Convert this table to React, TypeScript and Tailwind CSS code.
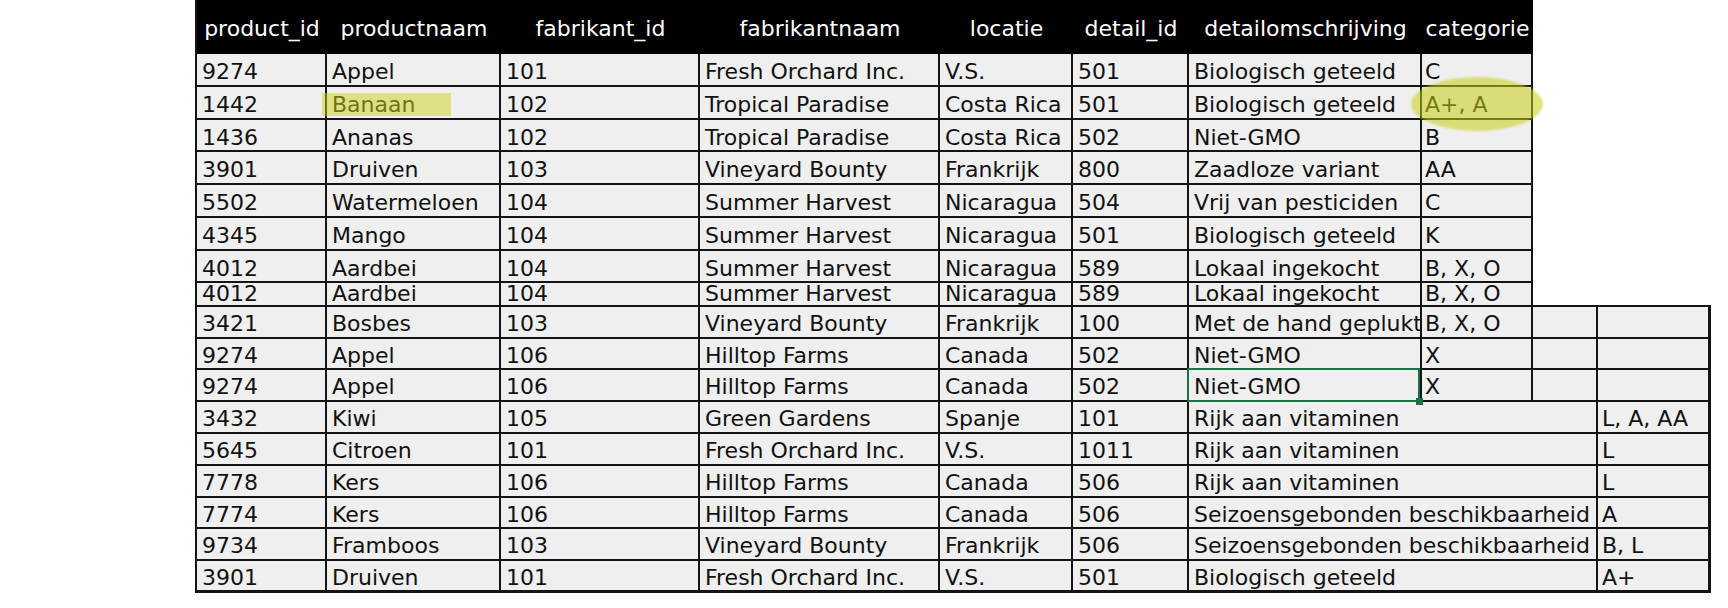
import React from "react";

const W = ["w-[130px]", "w-[174px]", "w-[199px]", "w-[240px]", "w-[133px]", "w-[116px]", "w-[233px]", "w-[111px]"];

const header = ["product_id", "productnaam", "fabrikant_id", "fabrikantnaam", "locatie", "detail_id", "detailomschrijving", "categorie"];

const upper = [
  { h: "h-[33px]", c: ["9274", "Appel", "101", "Fresh Orchard Inc.", "V.S.", "501", "Biologisch geteeld", "C"] },
  { h: "h-[33px]", c: ["1442", "Banaan", "102", "Tropical Paradise", "Costa Rica", "501", "Biologisch geteeld", "A+, A"] },
  { h: "h-[32px]", c: ["1436", "Ananas", "102", "Tropical Paradise", "Costa Rica", "502", "Niet-GMO", "B"] },
  { h: "h-[33px]", c: ["3901", "Druiven", "103", "Vineyard Bounty", "Frankrijk", "800", "Zaadloze variant", "AA"] },
  { h: "h-[33px]", c: ["5502", "Watermeloen", "104", "Summer Harvest", "Nicaragua", "504", "Vrij van pesticiden", "C"] },
  { h: "h-[33px]", c: ["4345", "Mango", "104", "Summer Harvest", "Nicaragua", "501", "Biologisch geteeld", "K"] },
  { h: "h-[32px]", c: ["4012", "Aardbei", "104", "Summer Harvest", "Nicaragua", "589", "Lokaal ingekocht", "B, X, O"] },
];

const cut = ["4012", "Aardbei", "104", "Summer Harvest", "Nicaragua", "589", "Lokaal ingekocht", "B, X, O"];

const wide = [
  { h: "h-[32px]", c: ["3421", "Bosbes", "103", "Vineyard Bounty", "Frankrijk", "100", "Met de hand geplukt", "B, X, O"] },
  { h: "h-[31px]", c: ["9274", "Appel", "106", "Hilltop Farms", "Canada", "502", "Niet-GMO", "X"] },
  { h: "h-[32px]", c: ["9274", "Appel", "106", "Hilltop Farms", "Canada", "502", "Niet-GMO", "X"] },
];

const merged = [
  { h: "h-[32px]", c: ["3432", "Kiwi", "105", "Green Gardens", "Spanje", "101", "Rijk aan vitaminen", "L, A, AA"] },
  { h: "h-[32px]", c: ["5645", "Citroen", "101", "Fresh Orchard Inc.", "V.S.", "1011", "Rijk aan vitaminen", "L"] },
  { h: "h-[32px]", c: ["7778", "Kers", "106", "Hilltop Farms", "Canada", "506", "Rijk aan vitaminen", "L"] },
  { h: "h-[31px]", c: ["7774", "Kers", "106", "Hilltop Farms", "Canada", "506", "Seizoensgebonden beschikbaarheid", "A"] },
  { h: "h-[32px]", c: ["9734", "Framboos", "103", "Vineyard Bounty", "Frankrijk", "506", "Seizoensgebonden beschikbaarheid", "B, L"] },
  { h: "h-[32px] border-b-[3px]", c: ["3901", "Druiven", "101", "Fresh Orchard Inc.", "V.S.", "501", "Biologisch geteeld", "A+"] },
];

function Cell({ w, children, className = "" }: { w: string; children?: React.ReactNode; className?: string }) {
  return (
    <div className={`${w} shrink-0 border-r-2 border-[#141414] whitespace-nowrap ${className}`}>
      {children}
    </div>
  );
}

export default function App() {
  return (
    <div className="w-[1728px] h-[608px] bg-white overflow-hidden font-['DejaVu_Sans',Verdana,sans-serif] text-[22px] leading-[26px] text-[#111]">
      <div className="ml-[195px] w-fit">
        {/* upper sheet */}
        <div className="w-[1338px] border-l-2 border-[#141414]">
          <div className="flex h-[54px] bg-black text-white">
            {header.map((t, i) => (
              <div key={i} className={`${W[i]} shrink-0 text-center pt-[16px] whitespace-nowrap`}>
                {t}
              </div>
            ))}
          </div>
          {upper.map((r, ri) => (
            <div key={ri} className={`flex ${r.h} border-b-2 border-[#141414] bg-[#efefef]`}>
              {r.c.map((t, ci) => (
                <Cell key={ci} w={W[ci]} className={`relative pt-[5px] ${ci === 7 ? "pl-[3px]" : "pl-[5px]"}`}>
                  {t}
                  {ri === 1 && ci === 1 && (
                    <div className="absolute -left-[5px] top-[6px] w-[129px] h-[23px] bg-[#cdd21e]/50" />
                  )}
                  {ri === 1 && ci === 7 && (
                    <div className="absolute z-10 -left-[11px] -top-[10px] w-[132px] h-[54px] rounded-[50%] bg-[#c9ce14]/55 blur-[1px]" />
                  )}
                </Cell>
              ))}
            </div>
          ))}
        </div>

        {/* lower sheet */}
        <div className="w-[1516px] border-l-2 border-[#141414]">
          <div className="flex h-[24px] border-b-2 border-[#141414]">
            {cut.map((t, ci) => (
              <Cell key={ci} w={W[ci]} className={`bg-[#efefef] leading-[22px] ${ci === 7 ? "pl-[3px]" : "pl-[5px]"}`}>
                {t}
              </Cell>
            ))}
            <div className="w-[178px] shrink-0" />
          </div>
          {wide.map((r, ri) => (
            <div key={ri} className={`flex ${r.h} border-b-2 border-[#141414] bg-[#efefef]`}>
              {r.c.map((t, ci) => (
                <Cell key={ci} w={W[ci]} className={`relative pt-[4px] ${ci === 7 ? "pl-[3px]" : "pl-[5px]"}`}>
                  {t}
                  {ri === 2 && ci === 6 && (
                    <div className="absolute z-10 -left-[2px] -top-[2px] right-0 -bottom-[2px] border-2 border-[#1e7145]">
                      <div className="absolute -right-[5px] -bottom-[5px] w-[7px] h-[7px] bg-[#1e7145]" />
                    </div>
                  )}
                </Cell>
              ))}
              <Cell w="w-[65px]" />
              <div className="w-[113px] shrink-0 border-r-[3px] border-[#141414]" />
            </div>
          ))}
          {merged.map((r, ri) => (
            <div key={ri} className={`flex ${r.h} border-b-2 border-[#141414] bg-[#efefef]`}>
              {r.c.slice(0, 6).map((t, ci) => (
                <Cell key={ci} w={W[ci]} className="pt-[4px] pl-[5px]">
                  {t}
                </Cell>
              ))}
              <Cell w="w-[409px]" className="pt-[4px] pl-[5px]">
                {r.c[6]}
              </Cell>
              <div className="w-[113px] shrink-0 border-r-[3px] border-[#141414] pt-[4px] pl-[4px] whitespace-nowrap">
                {r.c[7]}
              </div>
            </div>
          ))}
        </div>
      </div>
    </div>
  );
}
